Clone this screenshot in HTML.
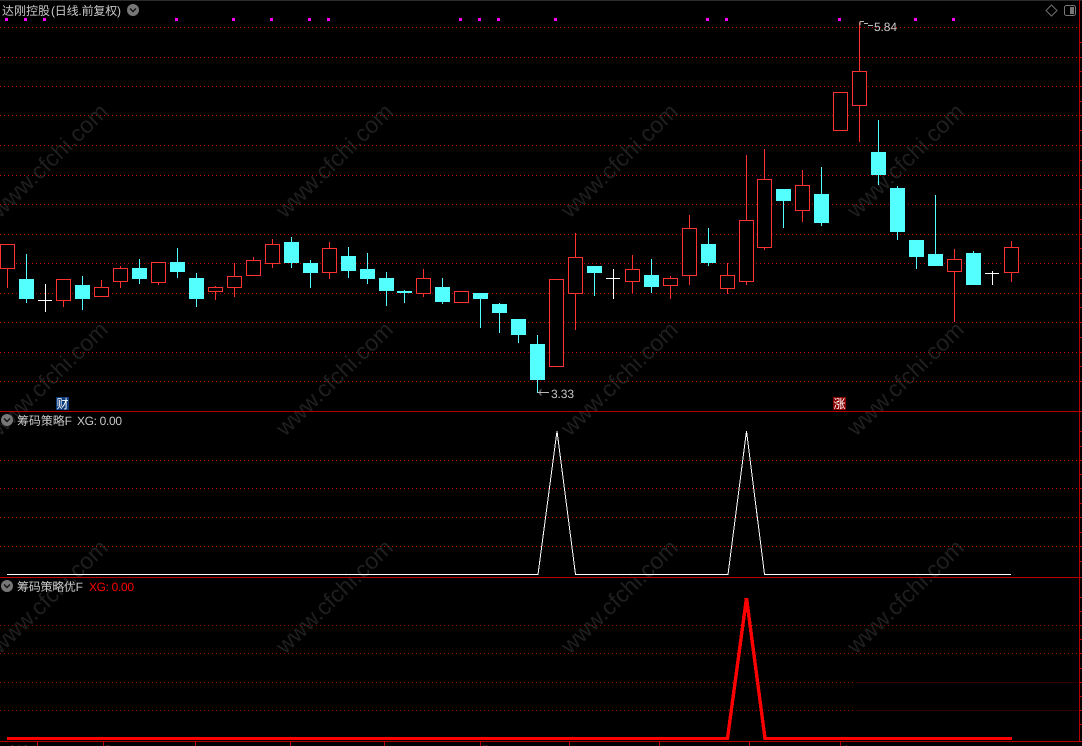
<!DOCTYPE html>
<html><head><meta charset="utf-8"><title>达刚控股</title>
<style>html,body{margin:0;padding:0;background:#000;overflow:hidden}svg{display:block}
.t{font-family:"Liberation Sans","WenQuanYi Zen Hei","Noto Sans CJK SC",sans-serif;font-size:12px;fill:#c8c8c8}
.w{font-family:"Liberation Sans",sans-serif;font-size:23px;fill:#1f1f1f}
.g{stroke:#c00000;stroke-width:1;stroke-dasharray:1 3;fill:none}
.g2{stroke:#a00000;stroke-width:1;stroke-dasharray:1 3;fill:none}
.g3{stroke:#2e0000;stroke-width:1;fill:none}
.s{stroke:#b80000;stroke-width:1;fill:none}
.r{fill:#000;stroke:#ff3232;stroke-width:1}
.c{fill:#54ffff}</style></head><body>
<svg xmlns="http://www.w3.org/2000/svg" width="1082" height="746" viewBox="0 0 1082 746" shape-rendering="crispEdges">
<rect width="1082" height="746" fill="#000"/>
<rect width="1082" height="1" fill="#2c2c2c"/>
<!-- watermarks -->
<g>
<text class="w" transform="translate(0,219) rotate(-44)">www.cfchi.com</text>
<text class="w" transform="translate(285,219) rotate(-44)">www.cfchi.com</text>
<text class="w" transform="translate(570,219) rotate(-44)">www.cfchi.com</text>
<text class="w" transform="translate(856,219) rotate(-44)">www.cfchi.com</text>
<text class="w" transform="translate(0,437) rotate(-44)">www.cfchi.com</text>
<text class="w" transform="translate(285,437) rotate(-44)">www.cfchi.com</text>
<text class="w" transform="translate(570,437) rotate(-44)">www.cfchi.com</text>
<text class="w" transform="translate(856,437) rotate(-44)">www.cfchi.com</text>
<text class="w" transform="translate(0,655) rotate(-44)">www.cfchi.com</text>
<text class="w" transform="translate(285,655) rotate(-44)">www.cfchi.com</text>
<text class="w" transform="translate(570,655) rotate(-44)">www.cfchi.com</text>
<text class="w" transform="translate(856,655) rotate(-44)">www.cfchi.com</text>
</g>
<!-- grid -->
<path class="g" d="M0 27.5H1078M0 57.5H1078M0 86.5H1078M0 115.5H1078M0 145.5H1078M0 175.5H1078M0 204.5H1078M0 234.5H1078M0 263.5H1078M0 293.5H1078M0 322.5H1078M0 352.5H1078M0 381.5H1078M0 460.5H1078M0 488.5H1078M0 517.5H1078M0 546.5H1078"/>
<path class="g2" d="M0 625.5H1078M0 653.5H1078M0 682.5H855M0 710.5H855"/>
<path class="g3" d="M856 682.5H1078M856 710.5H1078"/>
<path class="s" d="M0 411.5H1082M0 577.5H1082M0 741.5H1082M1079.5 0V741"/>
<path class="s" d="M1080 42.5h2M1080 57.5h2M1080 71.5h2M1080 86.5h2M1080 101.5h2M1080 115.5h2M1080 130.5h2M1080 145.5h2M1080 160.5h2M1080 175.5h2M1080 189.5h2M1080 204.5h2M1080 219.5h2M1080 234.5h2M1080 248.5h2M1080 263.5h2M1080 278.5h2M1080 293.5h2M1080 307.5h2M1080 322.5h2M1080 337.5h2M1080 352.5h2M1080 366.5h2M1080 381.5h2M1080 431.5h2M1080 446.5h2M1080 460.5h2M1080 474.5h2M1080 488.5h2M1080 503.5h2M1080 517.5h2M1080 532.5h2M1080 546.5h2M1080 561.5h2M1080 597.5h2M1080 611.5h2M1080 625.5h2M1080 639.5h2M1080 653.5h2M1080 668.5h2M1080 682.5h2M1080 696.5h2M1080 710.5h2M1080 724.5h2"/>
<path class="s" d="M37.5 742v4M103.5 742v4M195.5 742v4M290.5 742v4M384.5 742v4M480.5 742v4M569.5 742v4M659.5 742v4M749.5 742v4M840.5 742v4"/>
<!-- magenta dots -->
<path fill="#ff00ff" d="M5 18h3v3h-3zM24 18h3v3h-3zM43 18h3v3h-3zM175 18h3v3h-3zM232 18h3v3h-3zM270 18h3v3h-3zM308 18h3v3h-3zM327 18h3v3h-3zM459 18h3v3h-3zM478 18h3v3h-3zM497 18h3v3h-3zM554 18h3v3h-3zM706 18h3v3h-3zM725 18h3v3h-3zM838 18h3v3h-3zM914 18h3v3h-3zM952 18h3v3h-3z"/>
<!-- wicks -->
<path fill="none" stroke="#ff3232" d="M7.5 269V288M63.5 301V307M101.5 280V287M120.5 266V288M158.5 283V285M215.5 286V300M234.5 263V297M253.5 257V260M272.5 239V268M329.5 242V279M423.5 269V297M575.5 233V330M632.5 255V293M670.5 276V299M689.5 215V285M727.5 263V294M746.5 155V285M764.5 149V250M802.5 170V222M859.5 22V142M954.5 249V322M1011.5 241V282"/>
<path fill="none" stroke="#54ffff" d="M26.5 254V303M82.5 276V310M139.5 259V284M177.5 248V278M196.5 273V307M291.5 237V268M310.5 260V288M348.5 247V278M367.5 253V284M386.5 272V306M404.5 290V303M442.5 278V304M480.5 293V328M499.5 303V333M518.5 319V343M537.5 335V393M594.5 266V296M651.5 259V293M708.5 228V266M783.5 189V228M821.5 167V226M878.5 120V185M897.5 186V240M916.5 240V269M935.5 195V266M973.5 251V285"/>
<path fill="none" stroke="#fff" d="M45.5 284V312M38 300.5H52M613.5 269V299M606 278.5H620M992.5 271V285M985 273.5H999"/>
<!-- red bodies -->
<g class="r">
<rect x="0.5" y="244.5" width="14" height="24"/>
<rect x="56.5" y="279.5" width="14" height="21"/>
<rect x="94.5" y="287.5" width="14" height="9"/>
<rect x="113.5" y="268.5" width="14" height="13"/>
<rect x="151.5" y="262.5" width="14" height="20"/>
<rect x="208.5" y="287.5" width="14" height="4"/>
<rect x="227.5" y="276.5" width="14" height="11"/>
<rect x="246.5" y="260.5" width="14" height="15"/>
<rect x="265.5" y="244.5" width="14" height="19"/>
<rect x="322.5" y="248.5" width="14" height="24"/>
<rect x="416.5" y="278.5" width="14" height="15"/>
<rect x="454.5" y="291.5" width="14" height="11"/>
<rect x="549.5" y="279.5" width="14" height="87"/>
<rect x="568.5" y="257.5" width="14" height="36"/>
<rect x="625.5" y="269.5" width="14" height="12"/>
<rect x="663.5" y="278.5" width="14" height="7"/>
<rect x="682.5" y="228.5" width="14" height="47"/>
<rect x="720.5" y="275.5" width="14" height="13"/>
<rect x="739.5" y="220.5" width="14" height="61"/>
<rect x="757.5" y="179.5" width="14" height="68"/>
<rect x="795.5" y="185.5" width="14" height="25"/>
<rect x="833.5" y="92.5" width="14" height="38"/>
<rect x="852.5" y="71.5" width="14" height="34"/>
<rect x="947.5" y="259.5" width="14" height="12"/>
<rect x="1004.5" y="247.5" width="14" height="25"/>
</g>
<!-- cyan bodies -->
<g class="c">
<rect x="19" y="279" width="15" height="20"/>
<rect x="75" y="285" width="15" height="14"/>
<rect x="132" y="268" width="15" height="11"/>
<rect x="170" y="262" width="15" height="10"/>
<rect x="189" y="278" width="15" height="21"/>
<rect x="284" y="242" width="15" height="21"/>
<rect x="303" y="263" width="15" height="10"/>
<rect x="341" y="256" width="15" height="15"/>
<rect x="360" y="269" width="15" height="10"/>
<rect x="379" y="278" width="15" height="13"/>
<rect x="397" y="291" width="15" height="2"/>
<rect x="435" y="287" width="15" height="15"/>
<rect x="473" y="293" width="15" height="6"/>
<rect x="492" y="304" width="15" height="9"/>
<rect x="511" y="319" width="15" height="16"/>
<rect x="530" y="344" width="15" height="36"/>
<rect x="587" y="266" width="15" height="7"/>
<rect x="644" y="275" width="15" height="12"/>
<rect x="701" y="244" width="15" height="19"/>
<rect x="776" y="189" width="15" height="12"/>
<rect x="814" y="194" width="15" height="29"/>
<rect x="871" y="152" width="15" height="23"/>
<rect x="890" y="188" width="15" height="44"/>
<rect x="909" y="240" width="15" height="17"/>
<rect x="928" y="254" width="15" height="12"/>
<rect x="966" y="253" width="15" height="32"/>
</g>
<!-- panel 2 / 3 lines -->
<polyline fill="none" stroke="#fff" stroke-width="1" points="7,574.5 538,574.5 557,431 575.5,574.5 728,574.5 746.5,431 764.5,574.5 1011,574.5"/>
<polyline fill="none" stroke="#ff0000" stroke-width="3.4" points="7,738.5 727.5,738.5 746.5,598 765,738.5 1012,738.5"/>
<!-- labels -->
<g text-rendering="geometricPrecision">
<text class="t" x="2" y="15" textLength="48">达刚控股</text>
<text class="t" x="51" y="15" textLength="70">(日线.前复权)</text>
<text class="t" x="17" y="425" textLength="55">筹码策略F</text>
<text class="t" x="77" y="425" textLength="45">XG: 0.00</text>
<text class="t" x="17" y="591" textLength="66">筹码策略优F</text>
<text class="t" x="89" y="591" textLength="45" style="fill:#f00">XG: 0.00</text>
<text class="t" x="874" y="31" textLength="23">5.84</text>
<text class="t" x="551" y="398" textLength="23">3.33</text>
<text class="t" x="9" y="754" style="fill:#d04040">2024</text>
<text class="t" x="104" y="754" style="fill:#d04040">5</text>
<text class="t" x="482" y="754" style="fill:#d04040">7</text>
<text class="t" x="843" y="754" style="fill:#d04040">9</text>
</g>
<!-- price arrows -->
<path fill="none" stroke="#b8b8b8" d="M538 392.5H549M540 390.5V394.5M541 389.5V390.5M541 394.5V395.5M860 21.5H864M860 21.5V25.5M864 23.5H868M868 25.5H873"/>
<!-- tag boxes -->
<rect x="56" y="397" width="13" height="13" fill="#0b3a78"/>
<rect x="833" y="397" width="13" height="13" fill="#8a0000"/>
<text class="t" x="56.5" y="408" style="fill:#fff;font-size:12px">财</text>
<text class="t" x="833.5" y="408" style="fill:#fff;font-size:12px">涨</text>
<!-- dropdown icons -->
<g shape-rendering="auto">
<circle cx="133" cy="10" r="6" fill="#777"/>
<path d="M130 8.5l3 3 3-3" fill="none" stroke="#111" stroke-width="1.4"/>
<circle cx="7" cy="420" r="6" fill="#777"/>
<path d="M4 418.5l3 3 3-3" fill="none" stroke="#111" stroke-width="1.4"/>
<circle cx="7" cy="586" r="6" fill="#777"/>
<path d="M4 584.5l3 3 3-3" fill="none" stroke="#111" stroke-width="1.4"/>
<path d="M1051.5 5l5.5 5.5-5.5 5.5-5.5-5.5z" fill="none" stroke="#6e6e6e"/>
<rect x="1064.5" y="5.5" width="11" height="10" rx="2" fill="none" stroke="#777"/>
<rect x="1070" y="7" width="4" height="7" fill="#777"/>
</g>
</svg>
</body></html>
